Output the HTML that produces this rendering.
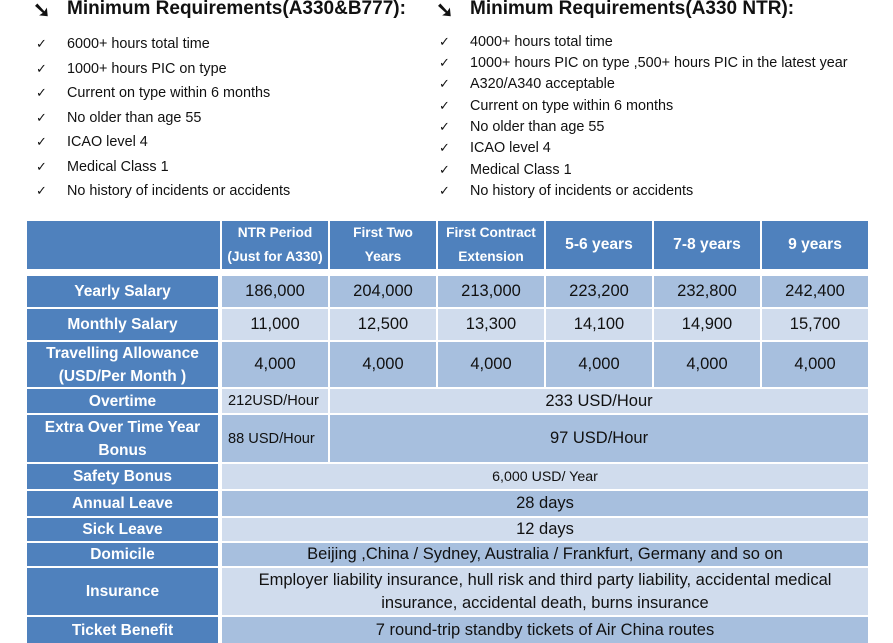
<!DOCTYPE html>
<html><head><style>
body{margin:0;width:893px;height:637px;overflow:hidden;background:#fff;font-family:"Liberation Sans",sans-serif;position:relative}
.a{position:absolute;display:flex;align-items:center;justify-content:center;text-align:center;box-sizing:border-box}
.h{background:#4F81BD;color:#fff;font-weight:bold;font-size:13.7px;line-height:24px}
.l{background:#4F81BD;color:#fff;font-weight:bold;font-size:15.5px;line-height:23px}
.d{background:#A7BFDE;color:#111;font-size:16.5px}
.w{background:#D0DCED;color:#111;font-size:16.5px}
.t{position:absolute;font-size:19px;font-weight:bold;color:#111;white-space:nowrap}
.i{position:absolute;font-size:14.4px;color:#111;white-space:nowrap}
.c{position:absolute;font-size:13px;color:#111}
</style></head><body>
<div class="t" style="left:33px;top:-2px;font-size:21px">➘</div>
<div class="t" style="left:67px;top:-2px">Minimum Requirements(A330&amp;B777):</div>
<div class="t" style="left:436px;top:-2px;font-size:21px">➘</div>
<div class="t" style="left:470px;top:-2px">Minimum Requirements(A330 NTR):</div>

<div class="c" style="left:36px;top:36px">✓</div><div class="i" style="left:67px;top:36px">6000+ hours total time</div>
<div class="c" style="left:36px;top:61px">✓</div><div class="i" style="left:67px;top:61px">1000+ hours PIC on type</div>
<div class="c" style="left:36px;top:85px">✓</div><div class="i" style="left:67px;top:85px">Current on type within 6 months</div>
<div class="c" style="left:36px;top:110px">✓</div><div class="i" style="left:67px;top:110px">No older than age 55</div>
<div class="c" style="left:36px;top:134px">✓</div><div class="i" style="left:67px;top:134px">ICAO level 4</div>
<div class="c" style="left:36px;top:159px">✓</div><div class="i" style="left:67px;top:159px">Medical Class 1</div>
<div class="c" style="left:36px;top:183px">✓</div><div class="i" style="left:67px;top:183px">No history of incidents or accidents</div>

<div class="c" style="left:439px;top:34px">✓</div><div class="i" style="left:470px;top:34px">4000+ hours total time</div>
<div class="c" style="left:439px;top:55px">✓</div><div class="i" style="left:470px;top:55px">1000+ hours PIC on type ,500+ hours PIC in the latest year</div>
<div class="c" style="left:439px;top:76px">✓</div><div class="i" style="left:470px;top:76px">A320/A340 acceptable</div>
<div class="c" style="left:439px;top:98px">✓</div><div class="i" style="left:470px;top:98px">Current on type within 6 months</div>
<div class="c" style="left:439px;top:119px">✓</div><div class="i" style="left:470px;top:119px">No older than age 55</div>
<div class="c" style="left:439px;top:140px">✓</div><div class="i" style="left:470px;top:140px">ICAO level 4</div>
<div class="c" style="left:439px;top:162px">✓</div><div class="i" style="left:470px;top:162px">Medical Class 1</div>
<div class="c" style="left:439px;top:183px">✓</div><div class="i" style="left:470px;top:183px">No history of incidents or accidents</div>

<!-- header -->
<div class="a h" style="left:27px;top:221px;width:193px;height:48px"></div>
<div class="a h" style="left:222px;top:221px;width:106px;height:48px">NTR Period<br>(Just for A330)</div>
<div class="a h" style="left:330px;top:221px;width:106px;height:48px">First Two<br>Years</div>
<div class="a h" style="left:438px;top:221px;width:106px;height:48px">First Contract<br>Extension</div>
<div class="a h" style="left:546px;top:221px;width:106px;height:48px;font-size:15.6px">5-6 years</div>
<div class="a h" style="left:654px;top:221px;width:106px;height:48px;font-size:15.6px">7-8 years</div>
<div class="a h" style="left:762px;top:221px;width:106px;height:48px;font-size:15.6px">9 years</div>

<!-- Yearly -->
<div class="a l" style="left:27px;top:276px;width:191px;height:31px">Yearly Salary</div>
<div class="a d" style="left:222px;top:276px;width:106px;height:31px">186,000</div>
<div class="a d" style="left:330px;top:276px;width:106px;height:31px">204,000</div>
<div class="a d" style="left:438px;top:276px;width:106px;height:31px">213,000</div>
<div class="a d" style="left:546px;top:276px;width:106px;height:31px">223,200</div>
<div class="a d" style="left:654px;top:276px;width:106px;height:31px">232,800</div>
<div class="a d" style="left:762px;top:276px;width:106px;height:31px">242,400</div>
<!-- Monthly -->
<div class="a l" style="left:27px;top:309px;width:191px;height:31px">Monthly Salary</div>
<div class="a w" style="left:222px;top:309px;width:106px;height:31px">11,000</div>
<div class="a w" style="left:330px;top:309px;width:106px;height:31px">12,500</div>
<div class="a w" style="left:438px;top:309px;width:106px;height:31px">13,300</div>
<div class="a w" style="left:546px;top:309px;width:106px;height:31px">14,100</div>
<div class="a w" style="left:654px;top:309px;width:106px;height:31px">14,900</div>
<div class="a w" style="left:762px;top:309px;width:106px;height:31px">15,700</div>
<!-- Travel -->
<div class="a l" style="left:27px;top:342px;width:191px;height:45px">Travelling Allowance<br>(USD/Per Month )</div>
<div class="a d" style="left:222px;top:342px;width:106px;height:45px">4,000</div>
<div class="a d" style="left:330px;top:342px;width:106px;height:45px">4,000</div>
<div class="a d" style="left:438px;top:342px;width:106px;height:45px">4,000</div>
<div class="a d" style="left:546px;top:342px;width:106px;height:45px">4,000</div>
<div class="a d" style="left:654px;top:342px;width:106px;height:45px">4,000</div>
<div class="a d" style="left:762px;top:342px;width:106px;height:45px">4,000</div>
<!-- Overtime -->
<div class="a l" style="left:27px;top:389px;width:191px;height:24px">Overtime</div>
<div class="a w" style="left:222px;top:389px;width:106px;height:24px;justify-content:flex-start;padding-left:6px;font-size:14.6px">212USD/Hour</div>
<div class="a w" style="left:330px;top:389px;width:538px;height:24px">233 USD/Hour</div>
<!-- Extra -->
<div class="a l" style="left:27px;top:415px;width:191px;height:47px">Extra Over Time Year<br>Bonus</div>
<div class="a d" style="left:222px;top:415px;width:106px;height:47px;justify-content:flex-start;padding-left:6px;font-size:14.6px">88 USD/Hour</div>
<div class="a d" style="left:330px;top:415px;width:538px;height:47px">97 USD/Hour</div>
<!-- rest -->
<div class="a l" style="left:27px;top:464px;width:191px;height:25px">Safety Bonus</div>
<div class="a w" style="left:222px;top:464px;width:646px;height:25px;font-size:14.2px">6,000 USD/ Year</div>
<div class="a l" style="left:27px;top:491px;width:191px;height:25px">Annual Leave</div>
<div class="a d" style="left:222px;top:491px;width:646px;height:25px">28 days</div>
<div class="a l" style="left:27px;top:518px;width:191px;height:23px">Sick Leave</div>
<div class="a w" style="left:222px;top:518px;width:646px;height:23px">12 days</div>
<div class="a l" style="left:27px;top:543px;width:191px;height:23px">Domicile</div>
<div class="a d" style="left:222px;top:543px;width:646px;height:23px">Beijing ,China / Sydney, Australia / Frankfurt, Germany and so on</div>
<div class="a l" style="left:27px;top:568px;width:191px;height:47px">Insurance</div>
<div class="a w" style="left:222px;top:568px;width:646px;height:47px;line-height:23px">Employer liability insurance, hull risk and third party liability, accidental medical<br>insurance, accidental death, burns insurance</div>
<div class="a l" style="left:27px;top:617px;width:191px;height:26px">Ticket Benefit</div>
<div class="a d" style="left:222px;top:617px;width:646px;height:26px">7 round-trip standby tickets of Air China routes</div>
</body></html>
